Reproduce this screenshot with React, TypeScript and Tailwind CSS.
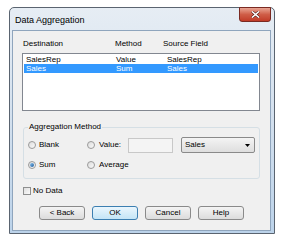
import React from "react";

function Radio({ checked = false }: { checked?: boolean }) {
  return (
    <div className="flex h-[8px] w-[8px] shrink-0 items-center justify-center rounded-full border border-[#9a9a9a] bg-gradient-to-br from-[#dcdcdc] to-[#fafafa]">
      {checked && (
        <div className="h-[4px] w-[4px] rounded-full bg-gradient-to-br from-[#8cc6f3] to-[#1a5a99]" />
      )}
    </div>
  );
}

function Btn({ label, primary = false }: { label: string; primary?: boolean }) {
  return (
    <div
      className={
        primary
          ? "flex h-[14px] w-[46px] items-center justify-center rounded-[3px] border border-[#3c7fb1] bg-gradient-to-b from-[#eaf6fd] to-[#c4e5f6]"
          : "flex h-[14px] w-[46px] items-center justify-center rounded-[3px] border border-[#8a8a8a] bg-gradient-to-b from-[#f4f4f4] to-[#dcdcdc]"
      }
    >
      {label}
    </div>
  );
}

export default function App() {
  return (
    <div className="h-[243px] w-[284px] bg-white pl-[9px] pt-[7px] font-['Liberation_Sans',Arial,sans-serif] text-[8px] leading-[10px] text-black">
      <div className="flex h-[227px] w-[266px] flex-col rounded-t-[5px] border border-[#5a6470] bg-gradient-to-b from-[#e6edf4] via-[#d3e0ee] to-[#bcd3ea] pb-[2px] pl-[2px] pr-[3px]">
        {/* title bar */}
        <div className="flex h-[22px] items-start justify-between">
          <span className="ml-[3px] mt-[7px] text-[9px]">Data Aggregation</span>
          <div className="-mt-[1px] flex h-[15px] w-[32px] items-center justify-center rounded-b-[3px] border border-[#7a2a22] bg-gradient-to-b from-[#e8a493] via-[#cf5d47] to-[#c13b27]">
            <svg width="9" height="7" viewBox="0 0 9 7">
              <path d="M1 0.5 L8 6.5 M8 0.5 L1 6.5" stroke="#4a1510" strokeWidth="2.6" />
              <path d="M1 0.5 L8 6.5 M8 0.5 L1 6.5" stroke="#ffffff" strokeWidth="1.6" />
            </svg>
          </div>
        </div>

        {/* client area */}
        <div className="flex flex-1 flex-col border border-[#8fa5bd] bg-[#f0f0f0]">
          <div className="ml-[10px] mt-[8px] flex">
            <span className="w-[92px]">Destination</span>
            <span className="w-[48px]">Method</span>
            <span>Source Field</span>
          </div>

          <div className="ml-[9px] mt-[4px] h-[58px] w-[238px] border border-[#828790] bg-white px-[1px] pt-[1px]">
            <div className="flex h-[9px] items-center">
              <span className="w-[92px] pl-[2px]">SalesRep</span>
              <span className="w-[51px]">Value</span>
              <span>SalesRep</span>
            </div>
            <div className="flex h-[9px] items-center bg-[#3399ff] text-white">
              <span className="w-[92px] pl-[2px]">Sales</span>
              <span className="w-[51px]">Sum</span>
              <span>Sales</span>
            </div>
          </div>

          <fieldset className="ml-[10px] mt-[11px] h-[57px] w-[237px] rounded-[3px] border border-[#d5dfe5]">
            <legend className="ml-[4px] px-[1px] leading-[10px]">Aggregation Method</legend>
            <div className="mt-[5px] flex h-[16px] items-center pl-[4px]">
              <div className="flex w-[59px] items-center gap-[3px]">
                <Radio />
                <span>Blank</span>
              </div>
              <div className="flex w-[41px] items-center gap-[4px]">
                <Radio />
                <span>Value:</span>
              </div>
              <div className="h-[15px] w-[45px] border border-[#c8c8c8] bg-[#f4f4f4]" />
              <div className="ml-[8px] flex h-[16px] w-[74px] items-center justify-between rounded-[2px] border border-[#8a8a8a] bg-gradient-to-b from-[#f4f4f4] to-[#dedede] pl-[3px] pr-[4px]">
                <span>Sales</span>
                <svg width="5" height="3" viewBox="0 0 5 3">
                  <path d="M0 0 L5 0 L2.5 3 Z" fill="#000" />
                </svg>
              </div>
            </div>
            <div className="mt-[4px] flex h-[16px] items-center pl-[4px]">
              <div className="flex w-[59px] items-center gap-[3px]">
                <Radio checked />
                <span>Sum</span>
              </div>
              <div className="flex items-center gap-[4px]">
                <Radio />
                <span>Average</span>
              </div>
            </div>
          </fieldset>

          <div className="ml-[10px] mt-[8px] flex h-[8px] items-center gap-[2px]">
            <div className="h-[8px] w-[8px] border border-[#8e8f8f] bg-gradient-to-br from-[#dedede] to-[#fbfbfb]" />
            <span>No Data</span>
          </div>

          <div className="ml-[26px] mt-[11px] flex gap-[7px]">
            <Btn label="< Back" />
            <Btn label="OK" primary />
            <Btn label="Cancel" />
            <Btn label="Help" />
          </div>
        </div>
      </div>
    </div>
  );
}
